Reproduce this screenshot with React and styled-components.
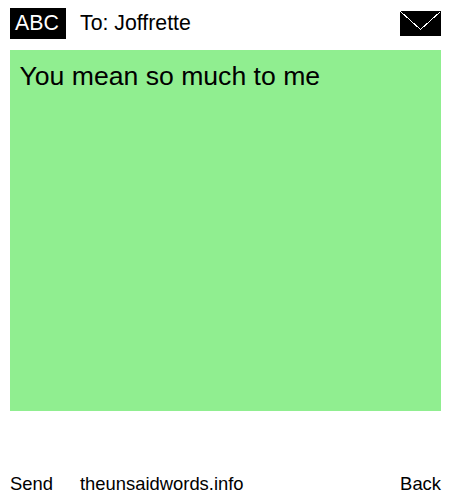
import styled, { createGlobalStyle } from "styled-components";

const GlobalStyle = createGlobalStyle`
  html, body {
    margin: 0;
    padding: 0;
    background: #fff;
  }
  body {
    font-family: "Liberation Sans", Arial, sans-serif;
    color: #000;
  }
`;

const SC = {
  Page: styled.main`
    width: 450px;
    height: 500px;
    box-sizing: border-box;
    padding: 8px 9px 0 10px;
    display: flex;
    flex-direction: column;
  `,
  Header: styled.header`
    height: 31px;
    display: flex;
    align-items: center;
  `,
  InputMode: styled.div`
    width: 56px;
    height: 31px;
    box-sizing: border-box;
    padding-right: 2px;
    background: #000;
    color: #fff;
    font-size: 21.3px;
    line-height: 31px;
    text-align: center;
  `,
  Recipient: styled.div`
    margin-left: 14px;
    font-size: 21.3px;
    line-height: 31px;
    flex: 1;
  `,
  Envelope: styled.svg`
    display: block;
    width: 41px;
    height: 25px;
    margin-top: -1px;
    shape-rendering: crispEdges;
  `,
  Message: styled.div`
    margin-top: 11px;
    height: 361px;
    box-sizing: border-box;
    padding: 10px 9.5px;
    background: #90ee90;
    font-size: 26.6px;
    line-height: 32px;
  `,
  Footer: styled.footer`
    margin-top: 62px;
    display: flex;
    font-size: 18.4px;
    line-height: 22px;
  `,
  Send: styled.span`
    width: 70px;
  `,
  Site: styled.span`
    flex: 1;
  `,
};

export default function App() {
  return (
    <SC.Page>
      <GlobalStyle />
      <SC.Header>
        <SC.InputMode>ABC</SC.InputMode>
        <SC.Recipient>To: Joffrette</SC.Recipient>
        <SC.Envelope viewBox="0 0 41 25">
          <rect width="41" height="25" fill="#000" />
          <path d="M0.5 0.5 L20.5 18.5 L40.5 0.5" fill="none" stroke="#fff" strokeWidth="1" />
        </SC.Envelope>
      </SC.Header>
      <SC.Message>You mean so much to me</SC.Message>
      <SC.Footer>
        <SC.Send>Send</SC.Send>
        <SC.Site>theunsaidwords.info</SC.Site>
        <span>Back</span>
      </SC.Footer>
    </SC.Page>
  );
}
